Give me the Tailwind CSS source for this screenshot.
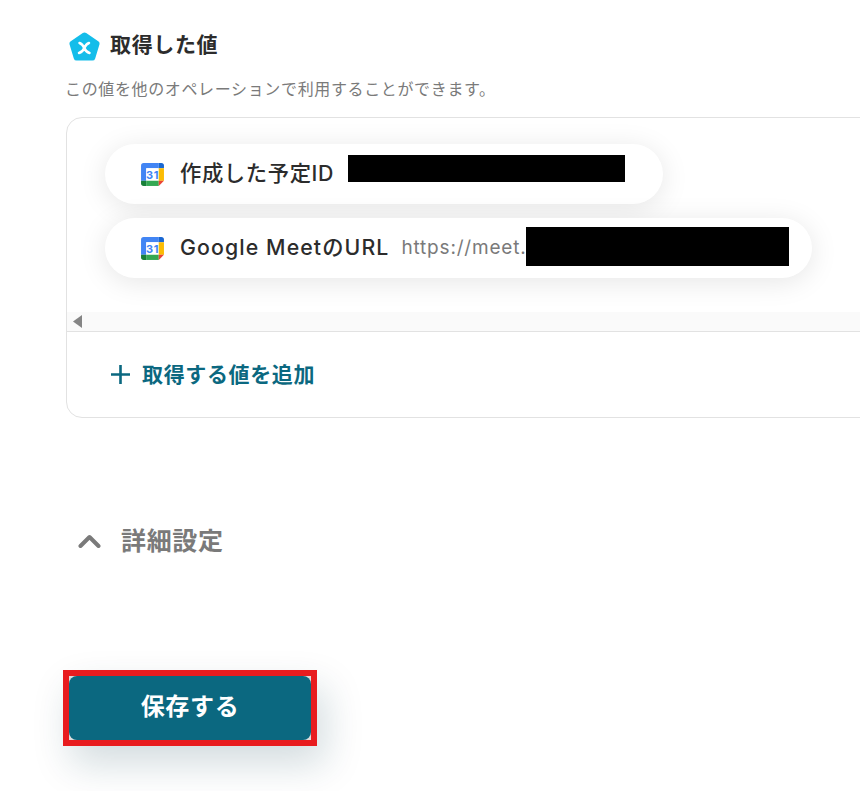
<!DOCTYPE html>
<html lang="ja">
<head>
    <meta charset="UTF-8">
    <meta name="viewport" content="width=device-width, initial-scale=1.0">
    <title>取得した値</title>
    <script src="https://cdn.jsdelivr.net/npm/@tailwindcss/browser@4"></script>
</head>
<body class="bg-white h-[791px] overflow-hidden font-['Inter','Noto_Sans_CJK_JP',sans-serif] text-[#2c2c2c] tracking-[0.04em]">
    <main class="pl-[66px] pt-[30px]">
        <!-- Heading -->
        <div class="flex items-center h-[32px] pl-[2px] gap-[9px]">
            <svg class="w-[33px] h-[32px]" viewBox="0 0 33 32">
                <path d="M14.8 3 Q16.5 1.8 18.2 3 L30.6 11.6 Q32 12.6 31.5 14.2 L27.2 28.4 Q26.6 30.6 24.4 30.6 L8.6 30.6 Q6.4 30.6 5.8 28.4 L1.5 14.2 Q1 12.6 2.4 11.6 Z" fill="#14bdea"/>
                <path d="M11.5 13 Q14.5 14 16.3 18 Q18 14 21 13 M11 23 Q14.5 22 16.3 18 Q18 22 21.5 23" fill="none" stroke="#fff" stroke-width="2.5" stroke-linecap="round"/>
            </svg>
            <h2 class="text-[21px] leading-[30px] pb-[2px] font-bold">取得した値</h2>
        </div>
        <p class="mt-[15px] -ml-[1px] text-[16px] leading-[24px] text-[#7a7a7a]">この値を他のオペレーションで利用することができます。</p>

        <!-- Card -->
        <section class="mt-[16px] w-[820px] h-[301px] border border-[#e2e2e2] rounded-[16px] flex flex-col">
            <div class="h-[194px] shrink-0 pl-[38px] pt-[26px] flex flex-col gap-[14px] items-start">
                <div class="w-[558px] h-[60px] shrink-0 rounded-full bg-white shadow-[0_4px_28px_rgba(0,0,0,0.1)] flex items-center pl-[35px] relative">
                    <svg class="w-[25px] h-[25px] shrink-0" viewBox="0 0 24 24">
                        <path d="M1 3.5 Q1 1 3.5 1 H18 V6 H6 V18 H1 Z" fill="#4285f4"/>
                        <rect x="6" y="6" width="12" height="12" fill="#fff"/>
                        <path d="M18 1 H20.5 Q23 1 23 3.5 V6 H18 Z" fill="#1967d2"/>
                        <rect x="18" y="6" width="5" height="12" fill="#fbbc04"/>
                        <path d="M6 18 H18 V23 H6 Z" fill="#34a853"/>
                        <path d="M1 18 H6 V23 H3.5 Q1 23 1 20.5 Z" fill="#188038"/>
                        <path d="M18 18 H23 L18 23 Z" fill="#ea4335"/>
                        <text x="12" y="16.2" text-anchor="middle" font-size="10.5" font-weight="700" fill="#4285f4" font-family="Inter">31</text>
                    </svg>
                    <span class="ml-[15px] text-[21.3px] font-medium whitespace-nowrap">作成した予定ID</span>
                    <div class="absolute left-[243px] top-[11px] w-[277px] h-[27px] bg-black"></div>
                </div>
                <div class="w-[707px] h-[60px] shrink-0 rounded-full bg-white shadow-[0_4px_28px_rgba(0,0,0,0.1)] flex items-center pl-[35px] relative">
                    <svg class="w-[25px] h-[25px] shrink-0" viewBox="0 0 24 24">
                        <path d="M1 3.5 Q1 1 3.5 1 H18 V6 H6 V18 H1 Z" fill="#4285f4"/>
                        <rect x="6" y="6" width="12" height="12" fill="#fff"/>
                        <path d="M18 1 H20.5 Q23 1 23 3.5 V6 H18 Z" fill="#1967d2"/>
                        <rect x="18" y="6" width="5" height="12" fill="#fbbc04"/>
                        <path d="M6 18 H18 V23 H6 Z" fill="#34a853"/>
                        <path d="M1 18 H6 V23 H3.5 Q1 23 1 20.5 Z" fill="#188038"/>
                        <path d="M18 18 H23 L18 23 Z" fill="#ea4335"/>
                        <text x="12" y="16.2" text-anchor="middle" font-size="10.5" font-weight="700" fill="#4285f4" font-family="Inter">31</text>
                    </svg>
                    <span class="ml-[15px] text-[21.3px] font-medium whitespace-nowrap tracking-[1.1px]">Google MeetのURL</span>
                    <span class="ml-[12px] text-[19px] text-[#7a7a7a] whitespace-nowrap tracking-[0.8px]">https://meet.google.com</span>
                    <div class="absolute left-[421px] top-[9px] w-[263px] h-[39px] bg-black"></div>
                </div>
            </div>
            <!-- Horizontal scrollbar -->
            <div class="h-[20px] shrink-0 bg-[#fafafa] border-b border-[#e2e2e2] flex items-center pl-[6px]">
                <svg class="w-[9px] h-[13px]" viewBox="0 0 9 13"><path d="M9 0 V13 L0 6.5 Z" fill="#858585"/></svg>
            </div>
            <button class="flex items-center h-[85px] shrink-0 pl-[43px] gap-[11px] text-[#0b6880] text-[21px] font-bold">
                <svg class="w-[21px] h-[21px]" viewBox="0 0 21 21"><path d="M10.5 1 V20 M1 10.5 H20" stroke="#0b6880" stroke-width="2.6" fill="none"/></svg>
                <span>取得する値を追加</span>
            </button>
        </section>

        <!-- Details toggle -->
        <div class="mt-[103px] flex items-center h-[40px] pl-[12px] gap-[20px] text-[#7a7a7a]">
            <svg class="w-[23px] h-[14px]" viewBox="0 0 23 14"><path d="M2.5 12 L11.5 3 L20.5 12" fill="none" stroke="#7a7a7a" stroke-width="4" stroke-linecap="round" stroke-linejoin="round"/></svg>
            <span class="text-[25px] font-bold pt-[2px]">詳細設定</span>
        </div>

        <!-- Save button -->
        <div class="mt-[109px] -ml-[3px] w-[254px] h-[76px] border-[6px] border-[#e81c1f] shadow-[8px_18px_38px_rgba(11,60,80,0.18)] bg-[#dcdcdc]">
            <button class="w-full h-full pb-[2px] bg-[#0b6880] rounded-[8px] text-white text-[24px] font-bold">保存する</button>
        </div>
    </main>
</body>
</html>
